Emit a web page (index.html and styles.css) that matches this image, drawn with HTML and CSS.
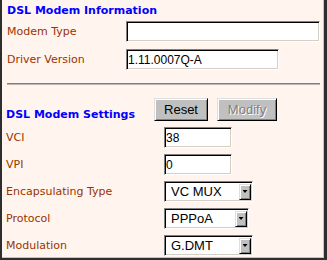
FILE: index.html
```html
<!DOCTYPE html>
<html lang="en">
<head>
<meta charset="utf-8">
<title>DSL Modem</title>
<link rel="stylesheet" href="styles.css">
</head>
<body>
<div class="frame">
  <section class="info">
    <h2 class="heading">DSL Modem Information</h2>
    <div class="form-grid info-grid">
      <label class="label" for="mtype">Modem Type</label>
      <input class="text w-194" id="mtype" type="text" value="">
      <label class="label" for="dver">Driver Version</label>
      <input class="text w-153" id="dver" type="text" value="1.11.0007Q-A">
    </div>
  </section>
  <hr class="rule">
  <section class="settings">
    <div class="settings-head">
      <h2 class="heading">DSL Modem Settings</h2>
      <div class="buttons">
        <button class="btn btn-reset" type="button">Reset</button>
        <button class="btn btn-modify" type="button" disabled>Modify</button>
      </div>
    </div>
    <div class="form-grid settings-grid">
      <label class="label" for="vci">VCI</label>
      <input class="text w-68" id="vci" type="text" value="38">
      <label class="label" for="vpi">VPI</label>
      <input class="text w-68" id="vpi" type="text" value="0">
      <label class="label" for="encap">Encapsulating Type</label>
      <span class="select w-89"><select id="encap"><option>VC MUX</option><option>LLC</option></select><span class="arrow"></span></span>
      <label class="label" for="proto">Protocol</label>
      <span class="select w-85"><select id="proto"><option>PPPoA</option><option>PPPoE</option></select><span class="arrow"></span></span>
      <label class="label" for="mod">Modulation</label>
      <span class="select w-89"><select id="mod"><option>G.DMT</option><option>T1.413</option></select><span class="arrow"></span></span>
    </div>
  </section>
</div>
</body>
</html>
```

FILE: styles.css
```css
html, body {
  margin: 0;
  background: #fff5ee;
}

.frame {
  width: 327px;
  height: 260px;
  box-sizing: border-box;
  border-left: 2px solid #2e2e2e;
  border-right: 3px solid #2e2e2e;
  border-bottom: 2px solid #2e2e2e;
  box-shadow: inset -1px -1px 0 #c8c4c0;
  background: #fff5ee;
  font-family: "DejaVu Sans", Verdana, sans-serif;
  font-size: 11px;
  color: #993300;
  overflow: hidden;
}

.heading {
  margin: 0;
  font-size: 11px;
  font-weight: bold;
  line-height: 13px;
  color: #0000ff;
  white-space: nowrap;
}

.info {
  padding: 4px 4px 0 5px;
}

.form-grid {
  display: grid;
  align-items: center;
  justify-items: start;
}

.info-grid {
  grid-template-columns: 119px auto;
  row-gap: 7px;
  margin-top: 4px;
}

.label {
  line-height: 13px;
  white-space: nowrap;
}

.text {
  box-sizing: border-box;
  height: 21px;
  margin: 0;
  padding: 0 1px;
  font: 12px "Liberation Sans", Arial, sans-serif;
  color: #000;
  background: #fff;
  border: 1px solid;
  border-color: #808080 #ffffff #ffffff #808080;
  box-shadow: inset 1px 1px 0 #000, inset -1px -1px 0 #d4d0c8;
  outline: none;
}

.w-194 { width: 194px; }
.w-153 { width: 153px; }
.w-68 { width: 68px; }
.w-89 { width: 89px; }
.w-85 { width: 85px; }

.rule {
  height: 0;
  margin: 13px 4px 0 5px;
  border: 0;
  border-top: 1px solid #808080;
  border-bottom: 1px solid #b8b8b8;
}

.settings {
  padding: 13px 4px 0 4px;
}

.settings-head {
  display: grid;
  grid-template-columns: 148px auto;
  align-items: end;
}

.buttons {
  display: flex;
  gap: 9px;
}

.btn {
  box-sizing: border-box;
  height: 23px;
  margin: 0;
  padding: 0;
  font: 13px "Liberation Sans", Arial, sans-serif;
  color: #000;
  background: #c0c0c0;
  border: 1px solid;
  border-color: #dfdfdf #000 #000 #dfdfdf;
  box-shadow: inset 1px 1px 0 #fff, inset -1px -1px 0 #808080;
}

.btn-reset { width: 54px; }
.btn-modify { width: 60px; }

.btn:disabled {
  color: #808080;
  text-shadow: 1px 1px 0 #fff;
}

.settings-grid {
  grid-template-columns: 158px auto;
  row-gap: 6px;
  margin-top: 6px;
}

.select {
  display: flex;
  align-items: center;
  box-sizing: border-box;
  height: 21px;
  padding: 1px 1px 1px 0;
  background: #fff;
  border: 1px solid;
  border-color: #808080 #ffffff #ffffff #808080;
  box-shadow: inset 1px 1px 0 #000, inset -1px -1px 0 #d4d0c8;
}

.select select {
  flex: 1;
  min-width: 0;
  height: 100%;
  margin: 0;
  padding: 0 0 0 6px;
  border: 0;
  background: transparent;
  font: 13px "Liberation Sans", Arial, sans-serif;
  color: #000;
  appearance: none;
  -webkit-appearance: none;
  outline: none;
}

.arrow {
  display: flex;
  align-items: center;
  justify-content: center;
  box-sizing: border-box;
  width: 12px;
  height: 16px;
  background: #c0c0c0;
  border: 1px solid;
  border-color: #dfdfdf #000 #000 #dfdfdf;
  box-shadow: inset 1px 1px 0 #fff, inset -1px -1px 0 #808080;
}

.arrow::after {
  content: "";
  width: 5px;
  height: 3px;
  background: #000;
  clip-path: polygon(0 0, 100% 0, 50% 100%);
}
```
